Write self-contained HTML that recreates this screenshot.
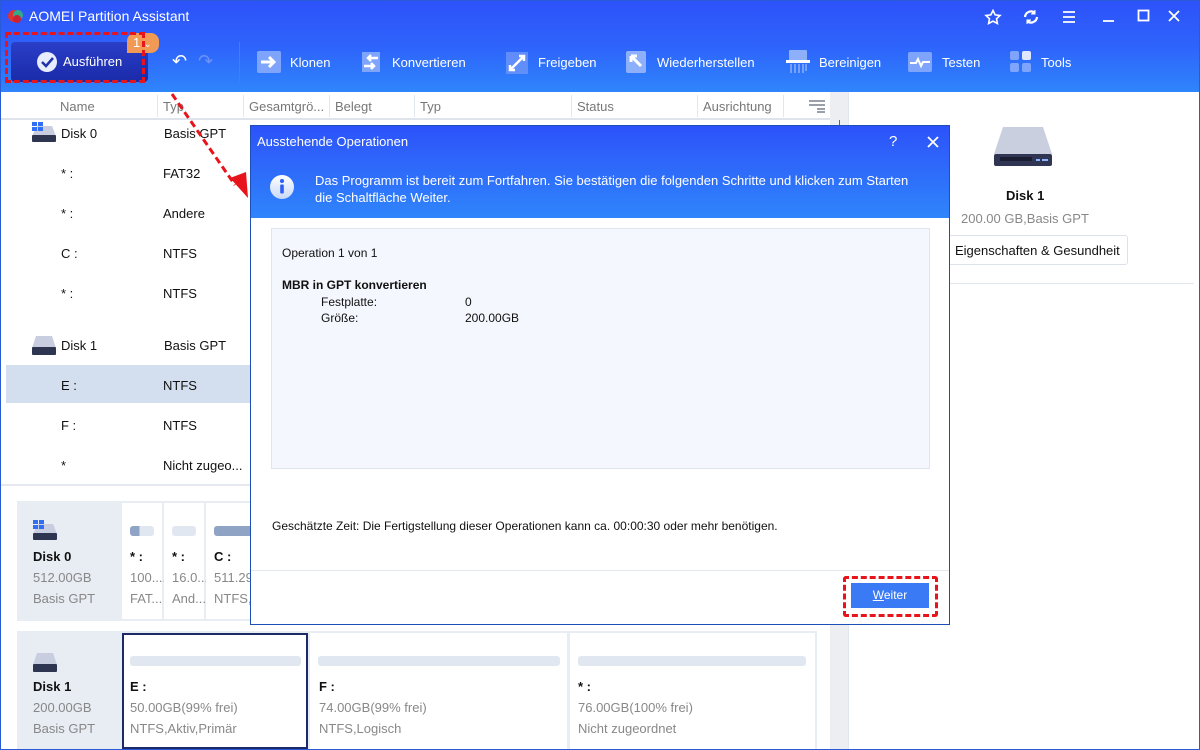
<!DOCTYPE html>
<html><head><meta charset="utf-8"><style>
*{margin:0;padding:0;box-sizing:border-box}
body{width:1200px;height:750px;overflow:hidden;font-family:"Liberation Sans",sans-serif;font-size:13px;color:#111;background:#fff;position:relative}
.a{position:absolute}
.hdr{left:0;top:0;width:1200px;height:92px;background:linear-gradient(180deg,#2d52fa 0%,#2e63fb 50%,#2f85fb 100%)}
.tb{color:#fff;font-size:13px}
.th{color:#777;font-size:13px}
.sep{width:1px;height:22px;background:#e2e6ee}
.row{font-size:13px;color:#111}
.gray{color:#888}
.card{background:#fff}
.bar{height:10px;border-radius:3px;background:#e1e7f1}
</style></head><body>
<div class="a" style="left:0;top:0;width:1200px;height:750px;border:1px solid #2a5bd7;z-index:50;pointer-events:none"></div>
<div class="a hdr"></div>
<svg class="a" style="left:7px;top:8px" width="18" height="16" viewBox="0 0 18 16"><circle cx="7" cy="8" r="6" fill="#d33"/><circle cx="11" cy="7" r="5" fill="#3a8"/><circle cx="10" cy="11" r="4" fill="#c23"/></svg>
<div class="a tb" style="left:29px;top:8px;font-size:14px">AOMEI Partition Assistant</div>
<svg class="a" style="left:984px;top:9px" width="18" height="16" viewBox="0 0 18 16"><path d="M9 1.5l2.2 4.4 4.8.6-3.5 3.3.9 4.7L9 12.2l-4.4 2.3.9-4.7L2 6.5l4.8-.6z" fill="none" stroke="#fff" stroke-width="1.6"/></svg>
<svg class="a" style="left:1022px;top:9px" width="18" height="16" viewBox="0 0 18 16"><path d="M3 8a6 6 0 0 1 10-4M15 8a6 6 0 0 1-10 4" fill="none" stroke="#fff" stroke-width="2.2"/><path d="M13 1v4h-4M5 15v-4h4" fill="#fff" stroke="#fff" stroke-width="1"/></svg>
<svg class="a" style="left:1062px;top:10px" width="14" height="14"><path d="M1 2h12M1 7h12M1 12h12" stroke="#fff" stroke-width="1.8"/></svg>
<svg class="a" style="left:1102px;top:10px" width="14" height="14"><path d="M1 11h11" stroke="#fff" stroke-width="1.8"/></svg>
<svg class="a" style="left:1137px;top:9px" width="14" height="14"><rect x="1.5" y="1.5" width="10" height="10" fill="none" stroke="#fff" stroke-width="1.8"/></svg>
<svg class="a" style="left:1167px;top:9px" width="14" height="14"><path d="M2 2l10 10M12 2L2 12" stroke="#fff" stroke-width="1.8"/></svg>
<div class="a" style="left:11px;top:42px;width:137px;height:40px;background:linear-gradient(#2a3ec8,#1a2aa8);border-radius:4px"></div>
<svg class="a" style="left:36px;top:51px" width="22" height="22"><circle cx="11" cy="11" r="10" fill="#e8ecff"/><path d="M6 11l4 4 7-8" fill="none" stroke="#2233aa" stroke-width="2.5"/></svg>
<div class="a tb" style="left:63px;top:54px">Ausführen</div>
<div class="a" style="left:127px;top:33px;width:32px;height:20px;background:#f19a55;border-radius:8px 8px 8px 0;color:#fff;font-size:13px;padding-left:6px;line-height:20px">1 <span style="font-size:9px">⌄</span></div>
<div class="a" style="left:5px;top:32px;width:140px;height:51px;border:3px dashed #e8141c"></div>
<div class="a tb" style="left:172px;top:51px;font-size:18px">↶</div>
<div class="a" style="left:198px;top:51px;font-size:18px;color:#6e92f6">↷</div>
<div class="a" style="left:239px;top:42px;width:1px;height:40px;background:#4c78f7"></div>
<svg class="a" style="left:257px;top:51px" width="24" height="22"><rect x="0" y="0" width="24" height="22" rx="2" fill="#7fa4fb"/><path d="M4 11h12M12 6l5 5-5 5" stroke="#fff" stroke-width="3" fill="none"/></svg>
<div class="a tb" style="left:290px;top:55px">Klonen</div>
<svg class="a" style="left:360px;top:50px" width="22" height="24"><rect x="2" y="2" width="18" height="20" fill="#7fa4fb"/><path d="M18 8H8M11 5L8 8l3 3M4 16h10M11 13l3 3-3 3" stroke="#fff" stroke-width="2.5" fill="none"/></svg>
<div class="a tb" style="left:392px;top:55px">Konvertieren</div>
<svg class="a" style="left:506px;top:52px" width="22" height="22"><rect x="0" y="0" width="22" height="22" fill="#6e96fa" opacity=".8"/><path d="M4 18L18 4M13 4h5v5M4 13v5h5" stroke="#fff" stroke-width="2.5" fill="none"/></svg>
<div class="a tb" style="left:538px;top:55px">Freigeben</div>
<svg class="a" style="left:626px;top:51px" width="22" height="23"><rect x="0" y="0" width="20" height="22" rx="2" fill="#8eb0fb"/><path d="M5 5l10 10M5 5v6M5 5h6" stroke="#fff" stroke-width="3" fill="none"/></svg>
<div class="a tb" style="left:657px;top:55px">Wiederherstellen</div>
<svg class="a" style="left:786px;top:50px" width="24" height="24"><rect x="3" y="0" width="18" height="11" rx="1" fill="#8eb0fb"/><rect x="0" y="10" width="24" height="3" fill="#fff"/><path d="M5 14v9M9 14v9M13 14v9M17 14v9M20 14v7" stroke="#8eb0fb" stroke-width="1.5"/></svg>
<div class="a tb" style="left:819px;top:55px">Bereinigen</div>
<svg class="a" style="left:908px;top:52px" width="24" height="20"><rect width="24" height="20" rx="2" fill="#7fa4fb"/><path d="M2 11h6l2-4 3 7 2-4h7" stroke="#fff" stroke-width="2" fill="none"/></svg>
<div class="a tb" style="left:942px;top:55px">Testen</div>
<svg class="a" style="left:1010px;top:51px" width="22" height="22"><rect x="0" y="0" width="9" height="9" rx="2" fill="#7fa4fb"/><rect x="12" y="0" width="9" height="9" rx="2" fill="#dfe8ff"/><rect x="0" y="12" width="9" height="9" rx="2" fill="#7fa4fb"/><rect x="12" y="12" width="9" height="9" rx="2" fill="#7fa4fb"/></svg>
<div class="a tb" style="left:1041px;top:55px">Tools</div>

<div class="a" style="left:0;top:92px;width:830px;height:28px;border-bottom:2px solid #dfe4ec"></div>
<div class="a th" style="left:60px;top:99px">Name</div>
<div class="a sep" style="left:157px;top:95px"></div><div class="a th" style="left:163px;top:99px">Typ</div>
<div class="a sep" style="left:243px;top:95px"></div><div class="a th" style="left:249px;top:99px">Gesamtgrö...</div>
<div class="a sep" style="left:329px;top:95px"></div><div class="a th" style="left:335px;top:99px">Belegt</div>
<div class="a sep" style="left:414px;top:95px"></div><div class="a th" style="left:420px;top:99px">Typ</div>
<div class="a sep" style="left:571px;top:95px"></div><div class="a th" style="left:577px;top:99px">Status</div>
<div class="a sep" style="left:697px;top:95px"></div><div class="a th" style="left:703px;top:99px">Ausrichtung</div>
<div class="a sep" style="left:783px;top:95px"></div>
<svg class="a" style="left:808px;top:99px" width="18" height="14"><path d="M1 2h16M1 6h16M9 10h8M9 13h8" stroke="#9aa0aa" stroke-width="2"/></svg>
<div class="a" style="left:830px;top:92px;width:18px;height:658px;background:#eceef2"></div>
<div class="a" style="left:848px;top:92px;width:1px;height:658px;background:#e2e6ee"></div>
<div class="a" style="left:839px;top:120px;width:1px;height:8px;background:#666"></div>

<svg class="a" style="left:32px;top:122px" width="24" height="20"><path d="M5 4h15l4 10H0z" fill="#c8cde0"/><rect x="0" y="13" width="24" height="7" rx="1" fill="#2e3550"/><rect x="0" y="0" width="5" height="4" fill="#2f6ef5"/><rect x="6" y="0" width="5" height="4" fill="#2f6ef5"/><rect x="0" y="5" width="5" height="4" fill="#2f6ef5"/><rect x="6" y="5" width="5" height="4" fill="#2f6ef5"/></svg>
<div class="a row" style="left:61px;top:126px">Disk 0</div><div class="a row" style="left:164px;top:126px">Basis GPT</div>
<div class="a row" style="left:61px;top:166px">* :</div><div class="a row" style="left:163px;top:166px">FAT32</div>
<div class="a row" style="left:61px;top:206px">* :</div><div class="a row" style="left:163px;top:206px">Andere</div>
<div class="a row" style="left:61px;top:246px">C :</div><div class="a row" style="left:163px;top:246px">NTFS</div>
<div class="a row" style="left:61px;top:286px">* :</div><div class="a row" style="left:163px;top:286px">NTFS</div>
<svg class="a" style="left:32px;top:335px" width="24" height="20"><path d="M4 1h16l4 12H0z" fill="#c8cde0"/><rect x="0" y="12" width="24" height="8" rx="1" fill="#2e3550"/></svg>
<div class="a row" style="left:61px;top:338px">Disk 1</div><div class="a row" style="left:164px;top:338px">Basis GPT</div>
<div class="a" style="left:6px;top:365px;width:244px;height:38px;background:#d3dfef"></div>
<div class="a row" style="left:61px;top:378px">E :</div><div class="a row" style="left:163px;top:378px">NTFS</div>
<div class="a row" style="left:61px;top:418px">F :</div><div class="a row" style="left:163px;top:418px">NTFS</div>
<div class="a row" style="left:61px;top:458px">*</div><div class="a row" style="left:163px;top:458px">Nicht zugeo...</div>
<div class="a" style="left:0;top:484px;width:830px;height:2px;background:#e6e9ef"></div>

<div class="a" style="left:17px;top:501px;width:800px;height:120px;background:#e8ecf3"></div>
<svg class="a" style="left:33px;top:520px" width="24" height="20"><path d="M5 4h15l4 10H0z" fill="#c8cde0"/><rect x="0" y="13" width="24" height="7" rx="1" fill="#2e3550"/><rect x="0" y="0" width="5" height="4" fill="#2f6ef5"/><rect x="6" y="0" width="5" height="4" fill="#2f6ef5"/><rect x="0" y="5" width="5" height="4" fill="#2f6ef5"/><rect x="6" y="5" width="5" height="4" fill="#2f6ef5"/></svg>
<div class="a" style="left:33px;top:549px;font-weight:bold">Disk 0</div>
<div class="a gray" style="left:33px;top:570px">512.00GB</div>
<div class="a gray" style="left:33px;top:591px">Basis GPT</div>
<div class="a card" style="left:122px;top:503px;width:40px;height:116px"></div>
<div class="a bar" style="left:130px;top:526px;width:24px;background:linear-gradient(90deg,#8fa4c4 40%,#e1e7f1 40%)"></div>
<div class="a" style="left:130px;top:549px;font-weight:bold">* :</div><div class="a gray" style="left:130px;top:570px">100....</div><div class="a gray" style="left:130px;top:591px">FAT...</div>
<div class="a card" style="left:164px;top:503px;width:40px;height:116px"></div>
<div class="a bar" style="left:172px;top:526px;width:24px"></div>
<div class="a" style="left:172px;top:549px;font-weight:bold">* :</div><div class="a gray" style="left:172px;top:570px">16.0...</div><div class="a gray" style="left:172px;top:591px">And...</div>
<div class="a card" style="left:206px;top:503px;width:60px;height:116px"></div>
<div class="a bar" style="left:214px;top:526px;width:50px;background:#8fa4c4"></div>
<div class="a" style="left:214px;top:549px;font-weight:bold">C :</div><div class="a gray" style="left:214px;top:570px">511.290</div><div class="a gray" style="left:214px;top:591px">NTFS,S</div>

<div class="a" style="left:17px;top:631px;width:800px;height:119px;background:#e8ecf3"></div>
<svg class="a" style="left:33px;top:652px" width="24" height="20"><path d="M4 1h16l4 12H0z" fill="#c8cde0"/><rect x="0" y="12" width="24" height="8" rx="1" fill="#2e3550"/></svg>
<div class="a" style="left:33px;top:679px;font-weight:bold">Disk 1</div>
<div class="a gray" style="left:33px;top:700px">200.00GB</div>
<div class="a gray" style="left:33px;top:721px">Basis GPT</div>
<div class="a card" style="left:122px;top:633px;width:186px;height:116px;border:2px solid #1c2a6a"></div>
<div class="a bar" style="left:130px;top:656px;width:171px"></div>
<div class="a" style="left:130px;top:679px;font-weight:bold">E :</div><div class="a gray" style="left:130px;top:700px">50.00GB(99% frei)</div><div class="a gray" style="left:130px;top:721px">NTFS,Aktiv,Primär</div>
<div class="a card" style="left:310px;top:633px;width:257px;height:116px"></div>
<div class="a bar" style="left:318px;top:656px;width:242px"></div>
<div class="a" style="left:319px;top:679px;font-weight:bold">F :</div><div class="a gray" style="left:319px;top:700px">74.00GB(99% frei)</div><div class="a gray" style="left:319px;top:721px">NTFS,Logisch</div>
<div class="a card" style="left:570px;top:633px;width:245px;height:116px"></div>
<div class="a bar" style="left:578px;top:656px;width:228px"></div>
<div class="a" style="left:578px;top:679px;font-weight:bold">* :</div><div class="a gray" style="left:578px;top:700px">76.00GB(100% frei)</div><div class="a gray" style="left:578px;top:721px">Nicht zugeordnet</div>

<svg class="a" style="left:994px;top:127px" width="58" height="40"><path d="M9 0h40l9 27H0z" fill="#c9cfdf"/><rect x="0" y="27" width="58" height="12" rx="2" fill="#2f3552"/><rect x="6" y="30" width="32" height="4" fill="#1a1e30"/><rect x="42" y="32" width="4" height="2" fill="#8ab4ff"/><rect x="48" y="32" width="6" height="2" fill="#8ab4ff"/></svg>
<div class="a" style="left:1006px;top:188px;font-weight:bold">Disk 1</div>
<div class="a gray" style="left:961px;top:211px">200.00 GB,Basis GPT</div>
<div class="a" style="left:945px;top:235px;width:183px;height:30px;border:1px solid #dde2ea;border-radius:3px;background:#fff"></div>
<div class="a" style="left:955px;top:243px">Eigenschaften &amp; Gesundheit</div>
<div class="a" style="left:949px;top:283px;width:245px;height:1px;background:#e3e7ee"></div>

<div class="a" style="left:250px;top:125px;width:700px;height:500px;background:#fff;border:1px solid #1d4fb8"></div>
<div class="a" style="left:251px;top:126px;width:698px;height:92px;background:linear-gradient(180deg,#2d52fa,#2f85fb)"></div>
<div class="a tb" style="left:257px;top:134px">Ausstehende Operationen</div>
<div class="a tb" style="left:889px;top:133px;font-size:15px">?</div>
<svg class="a" style="left:926px;top:135px" width="14" height="14"><path d="M2 2l10 10M12 2L2 12" stroke="#fff" stroke-width="1.8"/></svg>
<svg class="a" style="left:265px;top:170px" width="34" height="34"><defs><linearGradient id="g" x1="0" y1="0" x2="0" y2="1"><stop offset="0" stop-color="#fff"/><stop offset="1" stop-color="#c9d8f6"/></linearGradient></defs><circle cx="17" cy="17" r="12" fill="url(#g)"/><circle cx="17" cy="11" r="2" fill="#2d5ef5"/><rect x="15.2" y="14.5" width="3.6" height="9" rx="1" fill="#2d5ef5"/></svg>
<div class="a tb" style="left:315px;top:172px;line-height:17px;width:600px">Das Programm ist bereit zum Fortfahren. Sie bestätigen die folgenden Schritte und klicken zum Starten die Schaltfläche Weiter.</div>
<div class="a" style="left:271px;top:228px;width:659px;height:241px;background:#f4f7fd;border:1px solid #dfe5ef"></div>
<div class="a" style="left:282px;top:246px;font-size:12px">Operation 1 von 1</div>
<div class="a" style="left:282px;top:278px;font-size:12px;font-weight:bold">MBR in GPT konvertieren</div>
<div class="a" style="left:321px;top:295px;font-size:12px">Festplatte:</div><div class="a" style="left:465px;top:295px;font-size:12px">0</div>
<div class="a" style="left:321px;top:311px;font-size:12px">Größe:</div><div class="a" style="left:465px;top:311px;font-size:12px">200.00GB</div>
<div class="a" style="left:272px;top:519px;font-size:12px">Geschätzte Zeit: Die Fertigstellung dieser Operationen kann ca. 00:00:30 oder mehr benötigen.</div>
<div class="a" style="left:251px;top:570px;width:698px;height:1px;background:#e3e7ee"></div>
<div class="a" style="left:851px;top:583px;width:78px;height:25px;background:#3a7af5;color:#fff;text-align:center;line-height:25px;font-size:12px"><u>W</u>eiter</div>
<div class="a" style="left:843px;top:576px;width:95px;height:41px;border:3px dashed #e8141c;border-radius:3px"></div>

<svg class="a" style="left:160px;top:90px;z-index:20" width="100" height="120"><path d="M12 4L75 95" stroke="#e8141c" stroke-width="3" stroke-dasharray="7,4"/><path d="M70 88l18 20-2-26z" fill="#e8141c"/></svg>
</body></html>
